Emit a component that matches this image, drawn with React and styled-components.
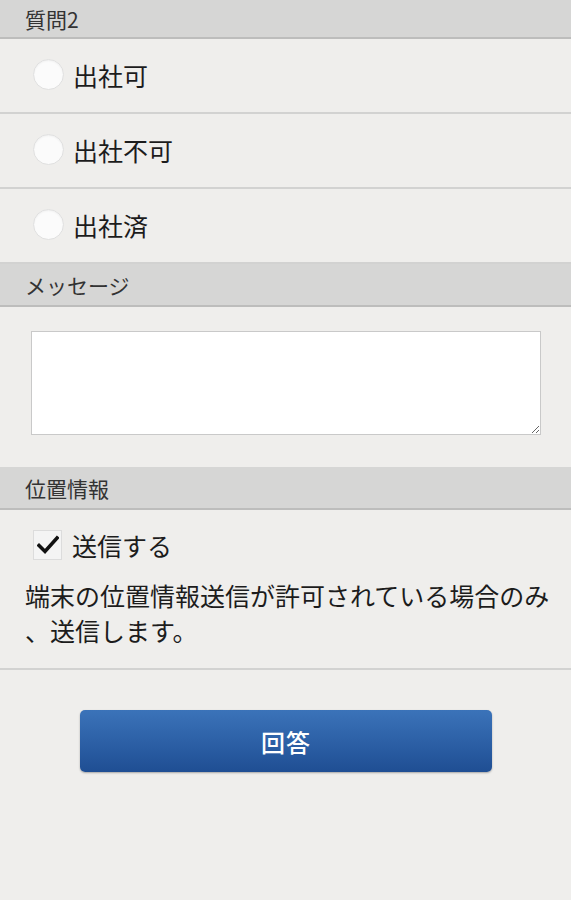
import React from 'react';
import styled, { createGlobalStyle } from 'styled-components';

const GlobalStyle = createGlobalStyle`
  html, body {
    margin: 0;
    padding: 0;
    background: #efeeec;
  }
  body {
    font-family: "Noto Sans CJK JP", "Noto Sans", sans-serif;
    color: #222;
  }
`;

const Page = styled.div`
  width: 571px;
  min-height: 900px;
  background: #efeeec;
`;

const SectionHeader = styled.div`
  height: ${p => p.$h || 41}px;
  display: flex;
  align-items: center;
  padding-left: 25px;
  background: #d6d6d5;
  border-bottom: 2px solid #bdbdbc;
  font-size: 21px;
  color: #333;
`;

const OptionRow = styled.label`
  display: flex;
  align-items: center;
  padding-left: 33px;
  padding-bottom: 2px;
  box-sizing: border-box;
  height: 75px;
  border-bottom: 2px solid #d2d2d1;
  font-size: 25px;
  color: #1c1c1c;
`;

const Radio = styled.span`
  width: 29px;
  height: 29px;
  border-radius: 50%;
  background: #fbfbfb;
  border: 1px solid #e0e0e0;
  box-shadow: inset 0 1px 2px rgba(0, 0, 0, 0.05);
  margin-right: 9px;
  flex-shrink: 0;
`;

const MessageBlock = styled.div`
  padding: 24px 30px 32px 31px;
`;

const TextArea = styled.textarea`
  display: block;
  width: 100%;
  height: 104px;
  box-sizing: border-box;
  border: 1px solid #c9c9c9;
  background: #fff;
  resize: vertical;
  font-family: inherit;
`;

const LocationBlock = styled.div`
  padding: 19px 8px 20px 25px;
  border-bottom: 2px solid #d2d2d1;
`;

const CheckRow = styled.label`
  display: flex;
  align-items: center;
  padding-left: 8px;
  font-size: 25px;
  color: #1c1c1c;
  height: 32px;
`;

const CheckBox = styled.span`
  width: 29px;
  height: 30px;
  box-sizing: border-box;
  border: 1px solid #dcdcdc;
  background: #f4f4f4;
  margin-right: 10px;
  display: flex;
  align-items: center;
  justify-content: center;
`;

const Note = styled.p`
  margin: 17px 0 0;
  font-size: 25px;
  line-height: 35px;
  line-break: anywhere;
  color: #1c1c1c;
`;

const ButtonWrap = styled.div`
  padding: 40px 79px 0 80px;
`;

const AnswerButton = styled.button`
  width: 100%;
  height: 62px;
  border: none;
  border-radius: 5px;
  background: linear-gradient(#3b73b9, #2a5da3 60%, #1f4e93);
  box-shadow: 0 1px 2px rgba(0, 0, 0, 0.3);
  color: #fff;
  font-family: inherit;
  font-size: 24px;
  font-weight: 500;
  letter-spacing: 1px;
`;

const options = ['出社可', '出社不可', '出社済'];

export default function App() {
  return (
    <Page>
      <GlobalStyle />
      <SectionHeader $h={37}>質問2</SectionHeader>
      {options.map(o => (
        <OptionRow key={o}>
          <Radio />
          {o}
        </OptionRow>
      ))}
      <SectionHeader>メッセージ</SectionHeader>
      <MessageBlock>
        <TextArea />
      </MessageBlock>
      <SectionHeader>位置情報</SectionHeader>
      <LocationBlock>
        <CheckRow>
          <CheckBox>
            <svg width="22" height="20" viewBox="0 0 22 20">
              <path d="M2 10.5 L8 16.5 L20 3" fill="none" stroke="#111" strokeWidth="3.6" strokeLinecap="square" />
            </svg>
          </CheckBox>
          送信する
        </CheckRow>
        <Note>端末の位置情報送信が許可されている場合のみ、送信します。</Note>
      </LocationBlock>
      <ButtonWrap>
        <AnswerButton>回答</AnswerButton>
      </ButtonWrap>
    </Page>
  );
}
